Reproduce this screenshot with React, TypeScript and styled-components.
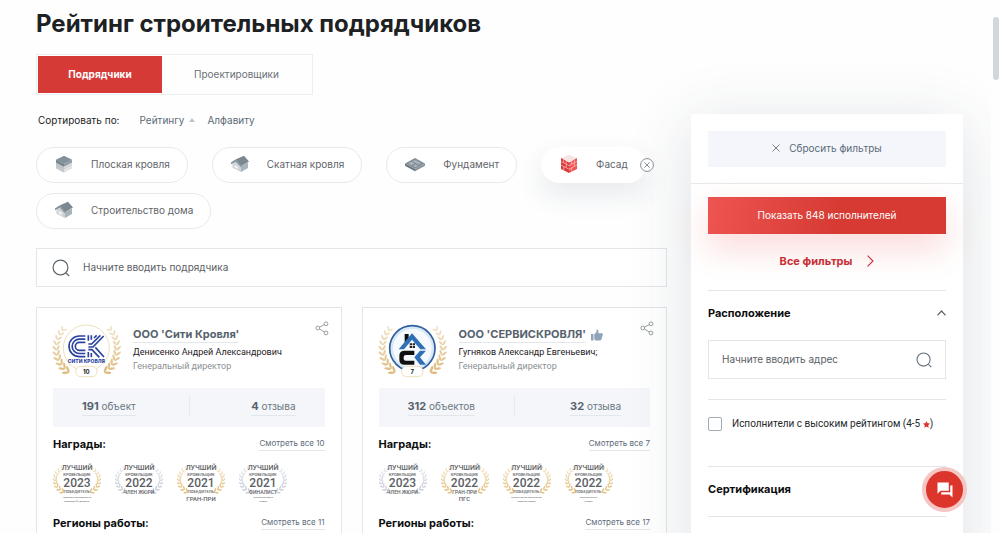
import React from "react";
import styled, { createGlobalStyle, css } from "styled-components";

const GlobalStyle = createGlobalStyle`
  *, *::before, *::after { box-sizing: border-box; }
  body {
    margin: 0;
    background: #fefefe;
    color: #1d2123;
    font-family: Inter, "Open Sans", sans-serif;
    font-size: 10px;
    line-height: 14px;
    overflow: hidden;
  }
  button, input { font: inherit; color: inherit; }
  button { padding: 0; border: 0; background: none; cursor: pointer; }
  h1, h2, h3, p { margin: 0; }
  a { color: inherit; text-decoration: none; }
  svg { display: block; flex: none; }
`;

const Viewport = styled.div`
  position: relative;
  height: 100vh;
  overflow: hidden;
  padding-right: 9px;
`;

const Page = styled.div`
  height: 100%;
  overflow: hidden;
  padding: 8px 28px 0 36px;
`;

const ScrollThumb = styled.div`
  position: absolute;
  top: 17px;
  right: 1px;
  width: 6px;
  height: 63px;
  border-radius: 3px;
  background: #d3d7dc;
`;

const Title = styled.h1`
  font-size: 24px;
  line-height: 32px;
  font-weight: 700;
  white-space: nowrap;
`;

const Columns = styled.div`
  display: flex;
  align-items: flex-start;
  gap: 24px;
  padding-top: 14px;
`;

const Main = styled.main`
  flex: 1;
  min-width: 0;
`;

const Tabs = styled.div`
  display: inline-flex;
  padding: 1px;
  border: 1px solid #eceef0;
  vertical-align: top;
`;

const Tab = styled.button<{ $active?: boolean }>`
  width: ${(p) => (p.$active ? 124 : 149)}px;
  height: 37px;
  padding-bottom: 2px;
  color: ${(p) => (p.$active ? "#fff" : "#6b7276")};
  font-weight: ${(p) => (p.$active ? 700 : 400)};
  background: ${(p) => (p.$active ? "#d63a36" : "transparent")};
`;

const SortRow = styled.div`
  display: flex;
  align-items: center;
  padding: 18px 0 0 2px;
  white-space: nowrap;
`;

const SortLabel = styled.span`
  margin-right: 20px;
`;

const SortButton = styled.button`
  display: flex;
  align-items: center;
  gap: 5px;
  margin-right: 12px;
  color: #5d6b78;
`;

const Chips = styled.div`
  display: flex;
  flex-wrap: wrap;
  gap: 10px 24px;
  padding-top: 20px;
`;

const Chip = styled.button<{ $active?: boolean }>`
  position: relative;
  display: flex;
  align-items: center;
  gap: 18px;
  height: 36px;
  padding: 0 17px 2px 18px;
  border: 1px solid #e6e9ec;
  border-radius: 18px;
  background: #fff;
  color: #5f6569;
  white-space: nowrap;
  ${(p) =>
    p.$active &&
    css`
      border-color: #fff;
      box-shadow: 0 12px 28px rgba(40, 60, 90, 0.11);
    `}
`;

const ChipClose = styled.span`
  position: absolute;
  right: -9px;
  top: 10px;
`;

const SearchBox = styled.label<{ $side?: boolean }>`
  display: flex;
  align-items: center;
  gap: 13px;
  height: 39px;
  padding: 0 ${(p) => (p.$side ? 13 : 15)}px;
  border: 1px solid #e2e6e9;
  background: #fff;
  color: #4d5255;
`;

const TextInput = styled.input`
  flex: 1;
  min-width: 0;
  padding: 0 0 2px;
  border: 0;
  outline: 0;
  background: none;
  &::placeholder { color: #5b6063; opacity: 1; }
`;

const MainSearch = styled.div`
  padding: 19px 0 20px;
`;

const Cards = styled.div`
  display: grid;
  grid-template-columns: 1fr 1fr;
  gap: 20px;
`;

const Card = styled.article`
  min-width: 0;
  height: 360px;
  padding: 8px 16px 0;
  border: 1px solid #e2e6e9;
  background: #fff;
`;

const CardHead = styled.div`
  display: flex;
  gap: 7px;
  margin-left: -5px;
  white-space: nowrap;
`;

const CardInfo = styled.div`
  flex: 1;
  min-width: 0;
  padding-top: 10px;
`;

const NameRow = styled.div`
  display: flex;
  align-items: center;
  gap: 5px;
`;

const Name = styled.a`
  border-bottom: 1px solid #e3e6ea;
  font-size: 11px;
  line-height: 16px;
  font-weight: 700;
  color: #56626e;
`;

const Person = styled.p`
  padding-top: 2px;
  font-family: Roboto, sans-serif;
  font-size: 9px;
`;

const Role = styled.p`
  font-family: Roboto, sans-serif;
  font-size: 9px;
  color: #8b9093;
`;

const ShareButton = styled.button`
  align-self: flex-start;
  margin: 5px -4px 0 -18px;
`;

const Stats = styled.div`
  display: grid;
  grid-template-columns: 1fr 1fr;
  margin-top: 6px;
  padding: 8px 0 10px;
  background: #f4f6fa;
`;

const Stat = styled.a`
  display: flex;
  align-items: center;
  padding: 0 29px;
  height: 21px;
  color: #6b7681;
  & + & {
    justify-content: flex-end;
    border-left: 1px solid #e6e9ee;
  }
`;

const StatText = styled.span`
  border-bottom: 1px solid #e3e6ea;
  line-height: 18px;
`;

const StatNumber = styled.b`
  font-size: 11px;
  color: #56626e;
`;

const SectionRow = styled.div`
  display: flex;
  align-items: center;
  justify-content: space-between;
  padding-top: 9px;
`;

const SectionTitle = styled.h3`
  font-size: 11px;
  line-height: 16px;
  font-weight: 700;
  color: #0c0e0f;
`;

const SeeAll = styled.a`
  border-bottom: 1px solid #e3e6ea;
  font-size: 8px;
  line-height: 13px;
  color: #5d6b78;
`;

const Awards = styled.div`
  display: flex;
  gap: 14px;
  height: 54px;
  padding-top: 12px;
`;

const AwardBox = styled.div`
  position: relative;
  width: 48px;
  height: 42px;
`;

const AwardText = styled.div`
  position: absolute;
  inset: 0;
  display: flex;
  flex-direction: column;
  align-items: center;
  font-family: Roboto, sans-serif;
  font-weight: 500;
  color: #5c6064;
  text-align: center;
  white-space: nowrap;
`;

const AwardLine = styled.span<{ $size: number; $height: number }>`
  font-size: ${(p) => p.$size}px;
  line-height: ${(p) => p.$height}px;
`;

const Sidebar = styled.aside`
  flex: none;
  width: 272px;
  height: 560px;
  margin-top: 60px;
  background: #fff;
  box-shadow: 0 10px 60px rgba(40, 60, 90, 0.15);
`;

const ResetWrap = styled.div`
  padding: 17px 17px 16px;
  border-bottom: 1px solid #e6e9ec;
`;

const ResetButton = styled.button`
  display: flex;
  align-items: center;
  justify-content: center;
  gap: 9px;
  width: 100%;
  height: 36px;
  padding-bottom: 2px;
  background: #f4f6fb;
  color: #5d6b78;
`;

const Filters = styled.div`
  padding: 13px 17px 0;
`;

const ShowButton = styled.button`
  width: 100%;
  height: 37px;
  padding-bottom: 2px;
  background: linear-gradient(100deg, #ee5451, #d63a33 55%);
  box-shadow: 0 14px 34px rgba(230, 60, 55, 0.2);
  color: #fff;
`;

const AllFilters = styled.a`
  display: flex;
  align-items: center;
  justify-content: center;
  gap: 15px;
  height: 57px;
  padding-bottom: 2px;
  border-bottom: 1px solid #e2e6e9;
  font-size: 11px;
  font-weight: 700;
  color: #c62f35;
`;

const GroupHeader = styled.button<{ $tall?: boolean }>`
  display: flex;
  align-items: center;
  justify-content: space-between;
  width: 100%;
  height: ${(p) => (p.$tall ? 50 : 45)}px;
  padding-bottom: ${(p) => (p.$tall ? 6 : 2)}px;
  border-bottom: ${(p) => (p.$tall ? "1px solid #e2e6e9" : "0")};
  font-size: 11px;
  font-weight: 700;
  color: #0c0e0f;
`;

const GroupBody = styled.div`
  padding: 4px 0 20px;
  border-bottom: 1px solid #e2e6e9;
`;

const CheckRow = styled.label`
  display: flex;
  align-items: flex-start;
  gap: 10px;
  height: 67px;
  padding-top: 17px;
  border-bottom: 1px solid #e2e6e9;
  white-space: nowrap;
`;

const CheckBox = styled.input`
  appearance: none;
  width: 14px;
  height: 14px;
  margin: 0;
  border: 1px solid #a3abb3;
  border-radius: 2px;
  background: #fff;
`;

const CheckText = styled.span`
  display: flex;
  align-items: center;
  font-family: Roboto, sans-serif;
  color: #26292b;
`;

const ChatButton = styled.button`
  position: absolute;
  right: 33px;
  bottom: 21px;
  display: flex;
  align-items: center;
  justify-content: center;
  width: 45px;
  height: 45px;
  border: 4px solid #f6c6c4;
  border-radius: 50%;
  background: #dc352b;
`;

const SearchIcon = () => (
  <svg width="18" height="18" viewBox="0 0 18 18" fill="none" stroke="#5f686e" strokeWidth="1.2">
    <circle cx="8.5" cy="8.5" r="7.4" />
    <path d="M14 14l3.2 3" />
  </svg>
);

const SearchIconSmall = () => (
  <svg width="16" height="16" viewBox="0 0 18 18" fill="none" stroke="#5f6d7a" strokeWidth="1.2">
    <circle cx="8.5" cy="8.5" r="7.4" />
    <path d="M14 14l3.2 3" />
  </svg>
);

const FlatRoofIcon = () => (
  <svg width="18" height="18" viewBox="0 0 18 18">
    <path d="M1 5.5l8 4.200v8L1 13.500z" fill="#c3c9cd" />
    <path d="M17 5.500l-8 4.200v8l8-4.200z" fill="#dfe3e5" />
    <path d="M1 4.800L9 .8l8 4-8 4.300z" fill="#82909a" />
    <path d="M1 4.800l8 4.300v2.600L1 7.500z" fill="#74828c" />
    <path d="M17 4.800l-8 4.300v2.600l8-4.200z" fill="#8f9ba3" />
    <path d="M1 9.500l8 4.200 8-4.200" fill="none" stroke="#b4bcc2" strokeWidth=".6" />
  </svg>
);

const HouseIcon = () => (
  <svg width="18" height="18" viewBox="0 0 18 18">
    <path d="M1.500 8.500L5 5.500l5 5.500v6l-8.500-4.300z" fill="#cdd3d7" />
    <path d="M10 11l7-3.500V13L10 17z" fill="#a9b3ba" />
    <path d="M3.500 9.800l3.500 1.700v2.800l-3.500-1.700z" fill="#eef0f1" />
    <path d="M4.500 4.500L13 .8l5 5.700-7.800 4.500z" fill="#7b8891" />
    <path d="M4.500 4.500l5.700 6.500v1.400L4.800 6.600 0 9.200V7.600z" fill="#7f8c95" />
  </svg>
);

const FoundationIcon = () => (
  <svg width="20" height="18" viewBox="0 0 20 18">
    <path d="M0 8.500l10 5.500v2.200L0 10.700z" fill="#66747e" />
    <path d="M20 8.500L10 14v2.200l10-5.500z" fill="#87939b" />
    <path d="M0 8.500L10 3l10 5.500L10 14z" fill="#83909a" />
    <path d="M3.500 8.500l3-1.700 3 1.700-3 1.700zM7.700 6.200l2.300-1.300 6 3.300-2.300 1.300zM8 11l2.700-1.500 2.500 1.300L10.400 12.300z" fill="#a9b4bb" />
  </svg>
);

const FacadeIcon = () => (
  <svg width="18" height="18" viewBox="0 0 18 18">
    <path d="M1 3l8 4 8-4-8-3z" fill="#f7e5e4" />
    <path d="M1 3l8 4.500V18l-8-4z" fill="#d93a38" />
    <path d="M17 3L9 7.500V18l8-4z" fill="#ef5350" />
    <path d="M1 6.500l8 4.200 8-4.200M1 10l8 4.200 8-4.200" fill="none" stroke="#fbdcdb" strokeWidth=".6" />
    <path d="M3.700 4.500v3.300M6.300 9.300v3.400M3.700 11.400v3.800M6.300 6v3M11.700 6v3.400M14.300 8v3.200M11.700 12.800v3.500M14.300 4.500v3" stroke="#fbdcdb" strokeWidth=".6" />
  </svg>
);

const ShareIcon = () => (
  <svg width="14" height="15" viewBox="0 0 14 15" fill="none" stroke="#8f9498" strokeWidth=".9">
    <circle cx="11" cy="2.800" r="1.900" />
    <circle cx="2.800" cy="7" r="1.900" />
    <circle cx="11" cy="12" r="1.900" />
    <path d="M4.500 6.100l4.800-2.400M4.500 8l4.800 3" />
  </svg>
);

type Leaf = { x: number; y: number; a: number; t: number };

const laurelLeaves = (cx: number, cy: number, rx: number, ry: number, from: number, to: number, count: number) => {
  const leaves: Leaf[] = [];
  for (let i = 0; i < count; i += 1) {
    const t = i / (count - 1);
    const angle = ((from + (to - from) * t) * Math.PI) / 180;
    const x = cx + rx * Math.cos(angle);
    const y = cy - ry * Math.sin(angle);
    // Angles run clockwise from the foot of the wreath up to its tip.
    const dx = rx * Math.sin(angle);
    const dy = ry * Math.cos(angle);
    leaves.push({ x, y, a: (Math.atan2(dy, dx) * 180) / Math.PI, t });
  }
  return leaves;
};

const LaurelSide = ({ leaves, size, color }: { leaves: Leaf[]; size: number; color: string }) => (
  <g fill={color}>
    {leaves.map((leaf, i) => {
      const s = size * (1.15 - leaf.t * 0.3);
      return (
        <g key={i} transform={`translate(${leaf.x} ${leaf.y}) rotate(${leaf.a})`} opacity={0.9 - leaf.t * 0.5}>
          <ellipse cx={s} cy="0" rx={s} ry={s * 0.36} transform="rotate(-36)" />
          <ellipse cx={s} cy="0" rx={s} ry={s * 0.36} transform="rotate(36)" />
        </g>
      );
    })}
  </g>
);

const Emblem = ({ badge, children }: { badge: string; children: React.ReactNode }) => {
  const leaves = laurelLeaves(117, 97, 92, 90, 234, 144, 10);
  return (
    <svg width="78" height="66" viewBox="0 0 234 198">
      <LaurelSide leaves={leaves} size={9} color="#dcb673" />
      <g transform="translate(232 0) scale(-1 1)">
        <LaurelSide leaves={leaves} size={9} color="#dcb673" />
      </g>
      {children}
      <rect x="83" y="151" width="64" height="31" rx="15" fill="#fff" stroke="#ecd7ae" strokeWidth="2.500" />
      <text x="115" y="173" textAnchor="middle" fontFamily="Inter, sans-serif" fontSize="18" fontWeight="700" fill="#222">
        {badge}
      </text>
    </svg>
  );
};

const CityLogo = () => (
  <Emblem badge="10">
    <circle cx="115" cy="96" r="69" fill="#fff" stroke="#ecd7ae" strokeWidth="2.500" />
    <g fill="none" stroke="#2b44a0" strokeWidth="5">
      <path d="M112 60H94a31 31 0 0 0 0 62H112" />
      <path d="M112 69.500H94a21.500 21.500 0 0 0 0 43H112" />
      <path d="M112 79H94a12 12 0 0 0 0 24H112" />
      <path d="M121 58v16M130 58v13M121 84h10l26-26M121 93h14l32-33M138 66l8-8M121 108v16M130 111v13M121 101h11l22 23M142 94l26 29" />
    </g>
    <text x="115" y="141" textAnchor="middle" fontFamily="Inter, sans-serif" fontSize="15" fontWeight="800" fill="#2b44a0">
      СИТИ КРОВЛЯ
    </text>
  </Emblem>
);

const ServiceLogo = () => (
  <Emblem badge="7">
    <circle cx="115" cy="97" r="68" fill="#d9e8f7" stroke="#2f5f9d" strokeWidth="5" />
    <circle cx="115" cy="97" r="58" fill="#f6fafe" />
    <path d="M92 54h12v14l-12 12z" fill="#111" />
    <path d="M74 100l40-48 42 48h-17l-25-29-24 29z" fill="#2f6fb8" />
    <path d="M107 82h7v6h-7zM116 82h7v6h-7zM107 90h7v6h-7zM116 90h7v6h-7z" fill="#222" />
    <path d="M121 104H92q-16 0-16 15v12q0 15 16 15h29v-12H96q-7 0-7-6v-5q0-6 7-6h25z" fill="#111" />
    <path d="M156 104h-18l-17 20 17 22h18l-18-22z" fill="#2f6fb8" />
  </Emblem>
);

type AwardData = { tone: "gold" | "silver"; year: string; title: string; sub?: string[]; big?: boolean };

const Award = ({ tone, year, title, sub = [], big }: AwardData) => {
  const leaves = laurelLeaves(76, 47, 70, 48, 232, 138, 9);
  const color = tone === "gold" ? "#e0bb72" : "#c4c7d6";
  return (
    <AwardBox>
      <svg width="48" height="42" viewBox="0 0 144 126">
        <LaurelSide leaves={leaves} size={6} color={color} />
        <g transform="translate(144 0) scale(-1 1)">
          <LaurelSide leaves={leaves} size={6} color={color} />
        </g>
      </svg>
      <AwardText>
        <AwardLine $size={7} $height={8}>ЛУЧШИЙ</AwardLine>
        <AwardLine $size={4} $height={5}>КРОВЕЛЬЩИК</AwardLine>
        <AwardLine $size={12} $height={12}>{year}</AwardLine>
        <AwardLine $size={title.length > 9 ? 4 : 5} $height={6}>{title}</AwardLine>
        {sub.map((line) => (
          <AwardLine key={line} $size={big ? 6 : 2} $height={big ? 7 : 4}>{line}</AwardLine>
        ))}
      </AwardText>
    </AwardBox>
  );
};

type Contractor = {
  logo: React.ReactNode;
  name: string;
  liked?: boolean;
  person: string;
  objects: [string, string];
  reviews: [string, string];
  awardCount: number;
  regionCount: number;
  awards: AwardData[];
};

const contractors: Contractor[] = [
  {
    logo: <CityLogo />,
    name: "ООО 'Сити Кровля'",
    person: "Денисенко Андрей Александрович",
    objects: ["191", "объект"],
    reviews: ["4", "отзыва"],
    awardCount: 10,
    regionCount: 11,
    awards: [
      { tone: "gold", year: "2023", title: "ПОБЕДИТЕЛЬ", sub: ["КОМПЛЕКСНОЕ РЕШЕНИЕ ПО", "ИЗОЛЯЦИИ ФУНДАМЕНТА"] },
      { tone: "silver", year: "2022", title: "ЧЛЕН ЖЮРИ" },
      { tone: "gold", year: "2021", title: "ПОБЕДИТЕЛЬ", sub: ["ГРАН-ПРИ"], big: true },
      { tone: "silver", year: "2021", title: "ФИНАЛИСТ", sub: ["ЭКСПЛУАТИРУЕМАЯ", "КРОВЛЯ"] },
    ],
  },
  {
    logo: <ServiceLogo />,
    name: "ООО 'СЕРВИСКРОВЛЯ'",
    liked: true,
    person: "Гугняков Александр Евгеньевич;",
    objects: ["312", "объектов"],
    reviews: ["32", "отзыва"],
    awardCount: 7,
    regionCount: 17,
    awards: [
      { tone: "silver", year: "2023", title: "ЧЛЕН ЖЮРИ" },
      { tone: "gold", year: "2022", title: "ГРАН-ПРИ", sub: ["ПГС"], big: true },
      { tone: "gold", year: "2022", title: "ПОБЕДИТЕЛЬ", sub: ["ОРИГИНАЛЬНОЕ ТЕХНИЧЕСКОЕ", "РЕШЕНИЕ КРОВЛИ"] },
      { tone: "gold", year: "2022", title: "ПОБЕДИТЕЛЬ", sub: ["МЕТАЛЛИЧЕСКАЯ", "КРОВЛЯ"] },
    ],
  },
];

const ContractorCard = ({ data }: { data: Contractor }) => (
  <Card>
    <CardHead>
      {data.logo}
      <CardInfo>
        <NameRow>
          <Name href="#">{data.name}</Name>
          {data.liked && (
            <svg width="12" height="12" viewBox="0 0 12 12" fill="#90a4b8">
              <path d="M0 5h2.500v6.500H0zM3.300 5.200L5.500 3V.6Q7.800.2 7.500 3l-.2 1.300H11q1.200.4.700 1.700l-1.300 4.500q-.3 1-1.300 1H5L3.300 10.500z" />
            </svg>
          )}
        </NameRow>
        <Person>{data.person}</Person>
        <Role>Генеральный директор</Role>
      </CardInfo>
      <ShareButton type="button" aria-label="Поделиться">
        <ShareIcon />
      </ShareButton>
    </CardHead>
    <Stats>
      {[data.objects, data.reviews].map(([count, label]) => (
        <Stat href="#" key={label}>
          <StatText>
            <StatNumber>{count}</StatNumber> {label}
          </StatText>
        </Stat>
      ))}
    </Stats>
    <SectionRow>
      <SectionTitle>Награды:</SectionTitle>
      <SeeAll href="#">Смотреть все {data.awardCount}</SeeAll>
    </SectionRow>
    <Awards>
      {data.awards.map((award, i) => (
        <Award key={i} {...award} />
      ))}
    </Awards>
    <SectionRow>
      <SectionTitle>Регионы работы:</SectionTitle>
      <SeeAll href="#">Смотреть все {data.regionCount}</SeeAll>
    </SectionRow>
  </Card>
);

export default function App() {
  return (
    <Viewport>
      <GlobalStyle />
      <Page>
        <Title>Рейтинг строительных подрядчиков</Title>
        <Columns>
          <Main>
            <Tabs>
              <Tab type="button" $active>Подрядчики</Tab>
              <Tab type="button">Проектировщики</Tab>
            </Tabs>
            <SortRow>
              <SortLabel>Сортировать по:</SortLabel>
              <SortButton type="button">
                Рейтингу
                <svg width="6" height="4" viewBox="0 0 6 4" fill="#bfc4c8"><path d="M0 4l3-4 3 4z" /></svg>
              </SortButton>
              <SortButton type="button">Алфавиту</SortButton>
            </SortRow>
            <Chips>
              <Chip type="button"><FlatRoofIcon />Плоская кровля</Chip>
              <Chip type="button"><HouseIcon />Скатная кровля</Chip>
              <Chip type="button"><FoundationIcon />Фундамент</Chip>
              <Chip type="button" $active>
                <FacadeIcon />Фасад
                <ChipClose>
                  <svg width="14" height="14" viewBox="0 0 14 14" fill="#fff" stroke="#7b8288" strokeWidth=".9">
                    <circle cx="7" cy="7" r="6.400" />
                    <path d="M4.300 4.300l5.400 5.400M9.700 4.300L4.300 9.700" />
                  </svg>
                </ChipClose>
              </Chip>
              <Chip type="button"><HouseIcon />Строительство дома</Chip>
            </Chips>
            <MainSearch>
              <SearchBox>
                <SearchIcon />
                <TextInput type="text" placeholder="Начните вводить подрядчика" aria-label="Подрядчик" />
              </SearchBox>
            </MainSearch>
            <Cards>
              {contractors.map((item) => (
                <ContractorCard key={item.name} data={item} />
              ))}
            </Cards>
          </Main>
          <Sidebar>
            <ResetWrap>
              <ResetButton type="button">
                <svg width="8" height="8" viewBox="0 0 8 8" fill="none" stroke="#76838f"><path d="M.5.5l7 7M7.500.5l-7 7" /></svg>
                Сбросить фильтры
              </ResetButton>
            </ResetWrap>
            <Filters>
              <ShowButton type="button">Показать 848 исполнителей</ShowButton>
              <AllFilters href="#">
                Все фильтры
                <svg width="7" height="12" viewBox="0 0 7 12" fill="none" stroke="#c62f35" strokeWidth="1.100"><path d="M.6.6L6 6 .6 11.400" /></svg>
              </AllFilters>
              <GroupHeader type="button">
                Расположение
                <svg width="9" height="6" viewBox="0 0 9 6" fill="none" stroke="#5a6268" strokeWidth="1.200"><path d="M.5 5.300l4-4.300 4 4.300" /></svg>
              </GroupHeader>
              <GroupBody>
                <SearchBox $side>
                  <TextInput type="text" placeholder="Начните вводить адрес" aria-label="Адрес" />
                  <SearchIconSmall />
                </SearchBox>
              </GroupBody>
              <CheckRow>
                <CheckBox type="checkbox" />
                <CheckText>
                  Исполнители с высоким рейтингом (4-5&nbsp;
                  <svg width="7" height="7" viewBox="0 0 10 10" fill="#d8322f"><path d="M5 0l1.500 3.300 3.500.4-2.600 2.400.7 3.600L5 7.900 1.900 9.700l.7-3.600L0 3.700l3.500-.4z" /></svg>
                  )
                </CheckText>
              </CheckRow>
              <GroupHeader type="button" $tall>Сертификация</GroupHeader>
            </Filters>
          </Sidebar>
        </Columns>
      </Page>
      <ScrollThumb />
      <ChatButton type="button" aria-label="Чат">
        <svg width="18" height="18" viewBox="0 0 24 24" fill="#fff">
          <path d="M2 2h15v11H6l-4 4zM19 6h3v16l-4-4H7v-3h12z" />
        </svg>
      </ChatButton>
    </Viewport>
  );
}
